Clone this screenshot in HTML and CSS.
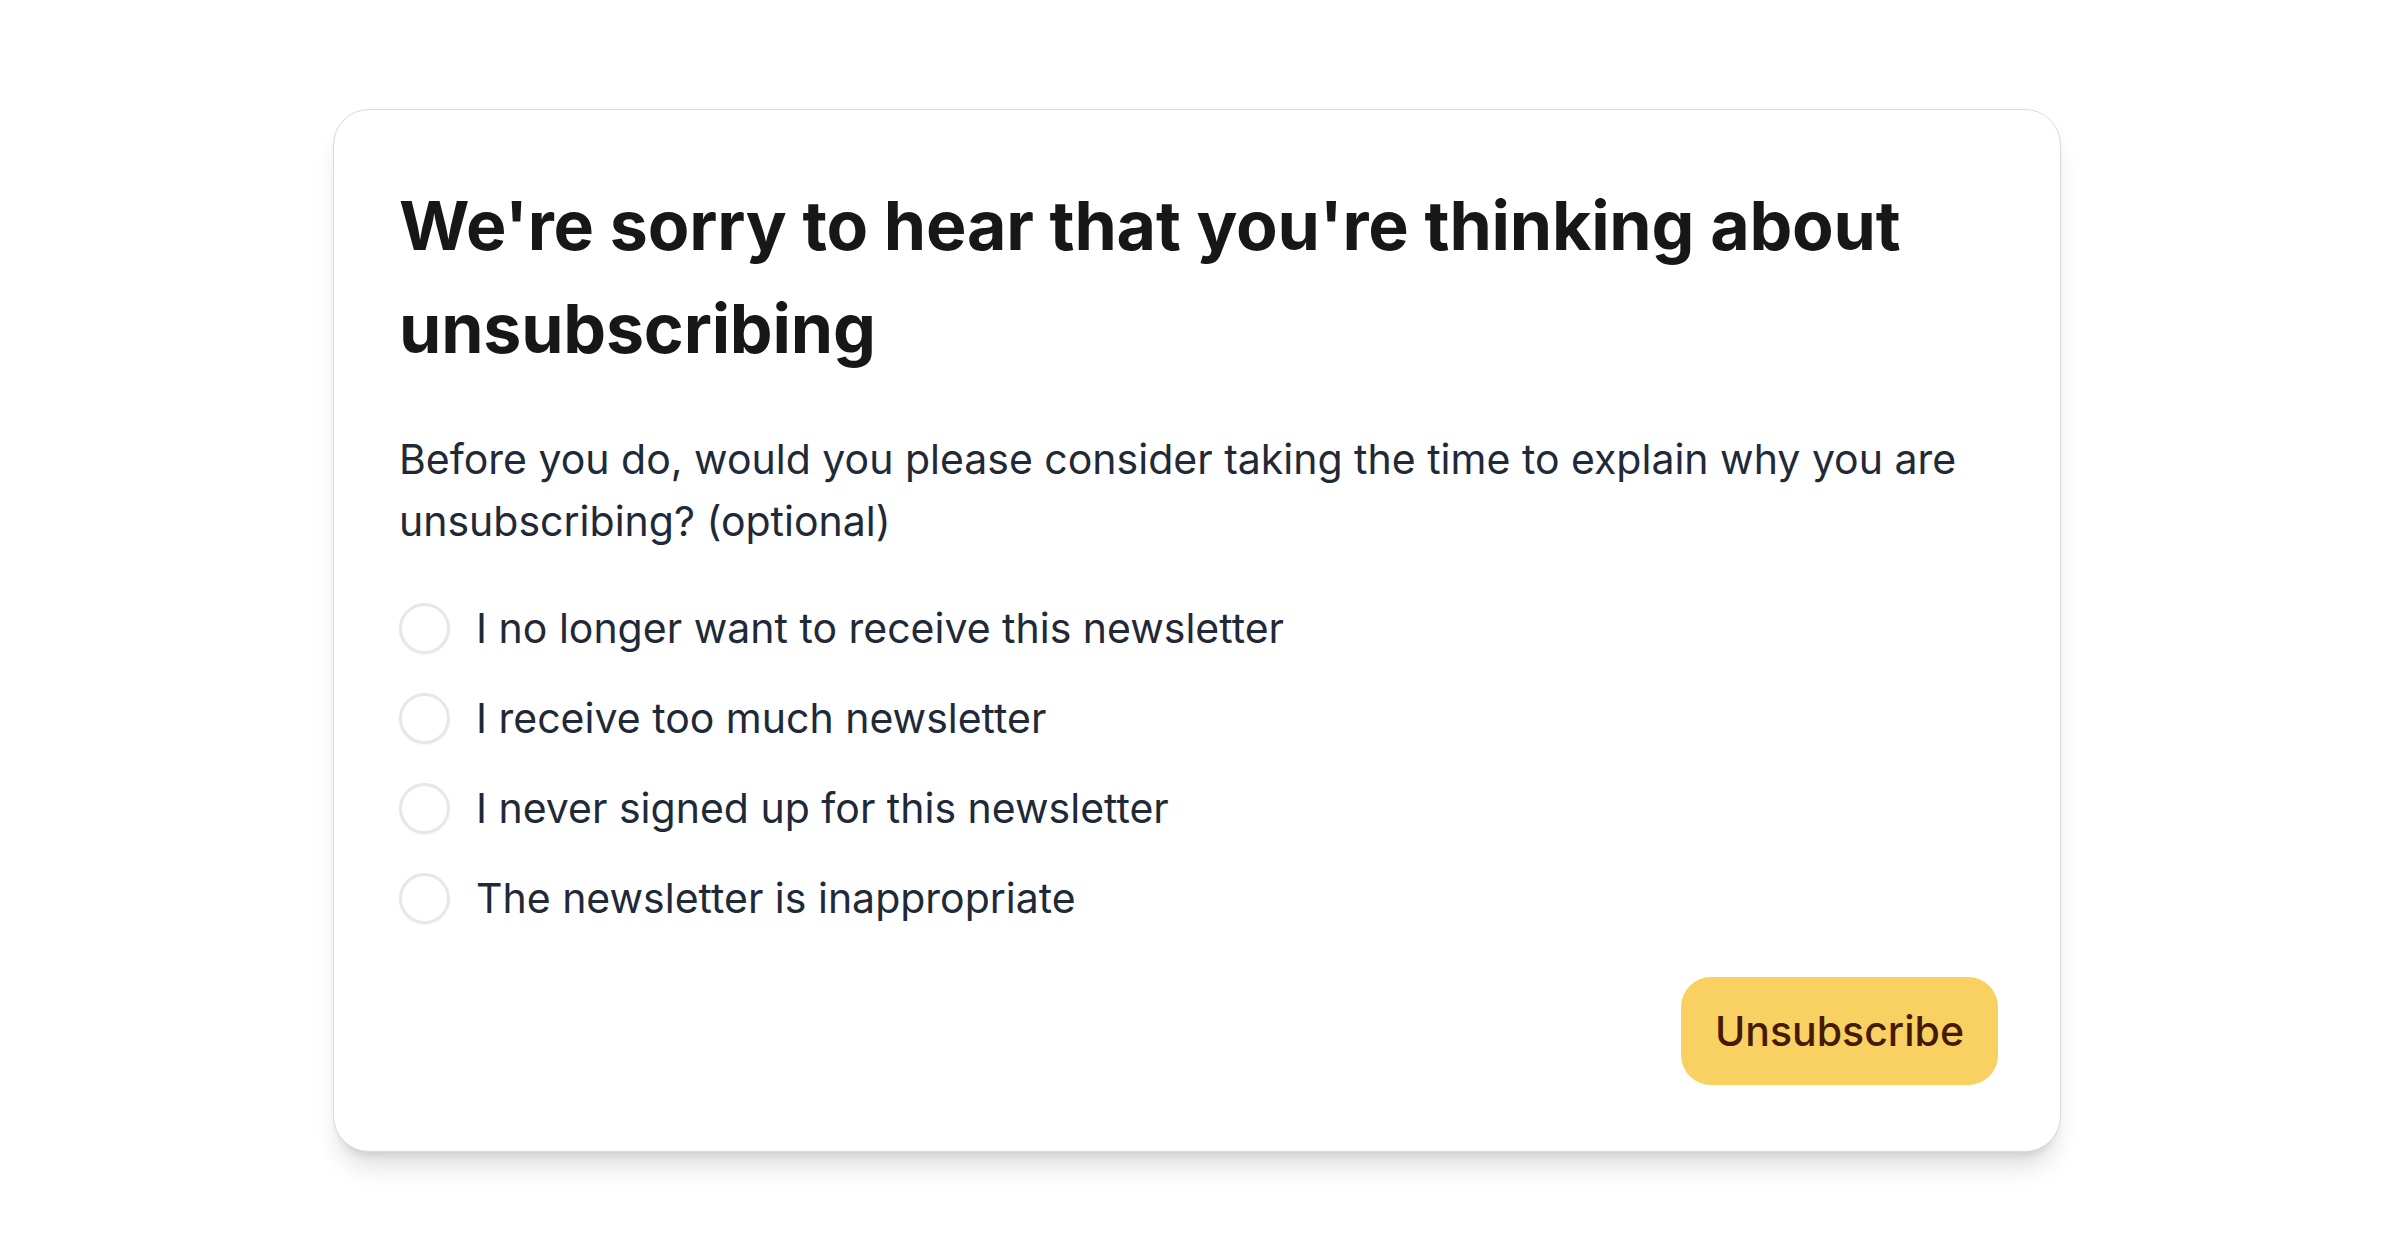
FILE: index.html
```html
<!DOCTYPE html>
<html lang="en">
<head>
<meta charset="utf-8">
<title>Unsubscribe</title>
<link rel="stylesheet" href="styles.css">
</head>
<body>
<main class="page">
  <form class="card">
    <h1 class="title">We're sorry to hear that you're thinking about unsubscribing</h1>
    <p class="lead">Before you do, would you please consider taking the time to explain why you are unsubscribing? (optional)</p>
    <div class="options">
      <label class="option"><span class="radio"></span><span class="label-text">I no longer want to receive this newsletter</span></label>
      <label class="option"><span class="radio"></span><span class="label-text">I receive too much newsletter</span></label>
      <label class="option"><span class="radio"></span><span class="label-text">I never signed up for this newsletter</span></label>
      <label class="option"><span class="radio"></span><span class="label-text">The newsletter is inappropriate</span></label>
    </div>
    <div class="actions">
      <button type="button" class="btn">Unsubscribe</button>
    </div>
  </form>
</main>
</body>
</html>
```
FILE: styles.css
```css
* { box-sizing: border-box; }
html, body { margin: 0; padding: 0; }
body {
  background: #ffffff;
  font-family: "Inter", "Liberation Sans", sans-serif;
  color: #1f2937;
}
.page {
  min-height: 100vh;
  display: flex;
  align-items: center;
  justify-content: center;
}
.card {
  width: 1728px;
  margin-right: 6px;
  background: #ffffff;
  border: 1px solid #d9d9d9;
  border-radius: 36px;
  padding: 64px 62px 66px 65px;
  box-shadow: 0 20px 25px -5px rgba(0,0,0,0.12), 0 8px 10px -6px rgba(0,0,0,0.12);
  display: flex;
  flex-direction: column;
}
.title {
  margin: 0;
  font-family: "Inter", "Liberation Sans", sans-serif;
  font-weight: 700;
  font-size: 68px;
  line-height: 103px;
  letter-spacing: -0.2px;
  color: #171717;
}
.lead {
  margin: 48px 0 0 0;
  font-size: 41px;
  line-height: 62px;
  color: #1f2937;
}
.options {
  margin-top: 51px;
  display: flex;
  flex-direction: column;
  gap: 39px;
}
.option {
  display: flex;
  align-items: center;
  gap: 26px;
  font-size: 41px;
  line-height: 51px;
  color: #1f2937;
}
.radio {
  width: 51px;
  height: 51px;
  border-radius: 50%;
  border: 3px solid #e7e7e9;
  box-shadow: 0 1px 2px rgba(0,0,0,0.05);
  flex: none;
}
.actions {
  display: flex;
  justify-content: flex-end;
  margin-top: 53px;
}
.btn {
  font-family: "Inter", "Liberation Sans", sans-serif;
  font-size: 41px;
  font-weight: 500;
  color: #451a03;
  background: #f9d162;
  border: none;
  border-radius: 30px;
  width: 317px;
  height: 108px;
  padding: 0;
}
```
